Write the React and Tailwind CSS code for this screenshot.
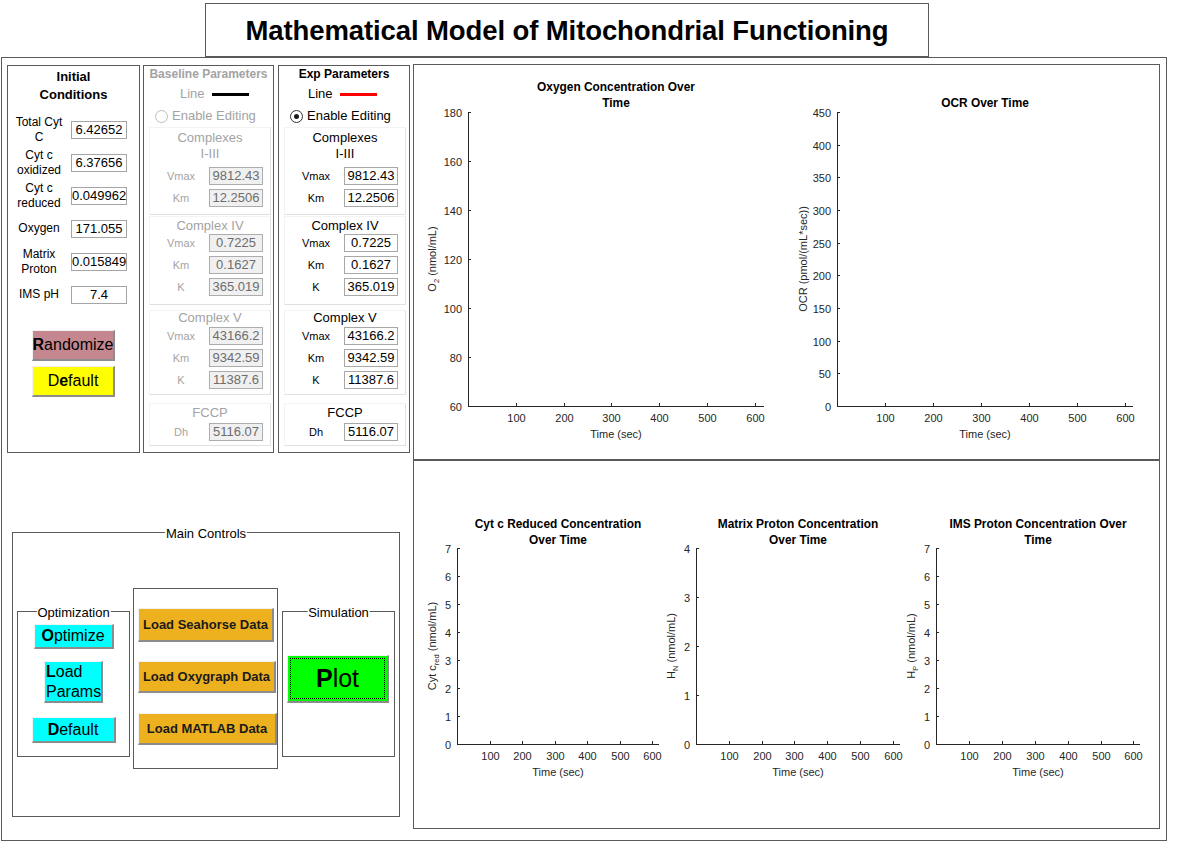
import React from 'react';

const initRows = [
  [['Total Cyt', 'C'], '6.42652'],
  [['Cyt c', 'oxidized'], '6.37656'],
  [['Cyt c', 'reduced'], '0.049962'],
  [['Oxygen'], '171.055'],
  [['Matrix', 'Proton'], '0.015849'],
  [['IMS pH'], '7.4'],
];

const groups = [
  {
    title: ['Complexes', 'I-III'],
    box: 'mt-[2px] h-[88px]',
    head: 'mt-[2px] leading-[16px]',
    body: 'mt-[5px]',
    rows: [['Vmax', '9812.43'], ['Km', '12.2506']],
  },
  {
    title: ['Complex IV'],
    box: 'mt-[1px] h-[89px]',
    head: 'mt-[1px] leading-[16px]',
    body: 'mt-0',
    rows: [['Vmax', '0.7225'], ['Km', '0.1627'], ['K', '365.019']],
  },
  {
    title: ['Complex V'],
    box: 'mt-[5px] h-[85px]',
    head: 'mt-0 leading-[14px]',
    body: 'mt-[2px]',
    rows: [['Vmax', '43166.2'], ['Km', '9342.59'], ['K', '11387.6']],
  },
  {
    title: ['FCCP'],
    box: 'mt-[8px] h-[43px]',
    head: 'mt-[1px] leading-[16px]',
    body: 'mt-[2px]',
    rows: [['Dh', '5116.07']],
  },
];

function Btn({ className = '', children }) {
  return (
    <button
      type="button"
      className={`flex items-center justify-center border-t border-l border-r-2 border-b-2 border-t-[#f2f2f2] border-l-[#f2f2f2] border-r-[#8c8c8c] border-b-[#8c8c8c] ${className}`}
    >
      {children}
    </button>
  );
}

function ParamPanel({ title, active, lineClass, lineColor, radioClass }) {
  const txt = active ? 'text-black' : 'text-[#a3a3a3]';
  return (
    <div className={`w-full h-full flex flex-col ${txt}`}>
      <div className="h-[16px] leading-[16px] text-center text-[12px] font-bold">{title}</div>
      <div className={`mt-[3px] h-[18px] flex items-center text-[13px] ${lineClass}`}>
        <span>Line</span>
        <span className={`ml-[7px] w-[37px] h-[3px] ${lineColor}`}></span>
      </div>
      <div className="mt-[4px] h-[18px] flex items-center text-[13px]">
        <span className={`ml-[11px] w-[13px] h-[13px] rounded-full border bg-white flex items-center justify-center ${radioClass}`}>
          {active && <span className="w-[5px] h-[5px] rounded-full bg-[#1a1a1a]"></span>}
        </span>
        <span className="ml-[4px]">Enable Editing</span>
      </div>
      {groups.map((g) => (
        <div key={g.title[0]} className={`ml-[5px] w-[122px] border border-[#f3f3f3] border-r-[#e1e1e1] border-b-[#e1e1e1] ${g.box}`}>
          <div className={`text-center text-[13px] ${g.head}`}>
            {g.title.map((t) => (
              <div key={t}>{t}</div>
            ))}
          </div>
          <div className={`flex flex-col gap-[4px] ${g.body}`}>
            {g.rows.map(([k, v]) => (
              <div key={k} className="flex items-center h-[18px]">
                <div className="w-[59px] pl-[3px] text-center text-[11px]">{k}</div>
                <div
                  className={`w-[54px] h-[18px] border text-center text-[13px] leading-[16px] ${
                    active ? 'bg-white border-[#a8a8a8] text-black' : 'bg-[#f0f0f0] border-[#adadad] text-[#6d6d6d]'
                  }`}
                >
                  {v}
                </div>
              </div>
            ))}
          </div>
        </div>
      ))}
    </div>
  );
}

function Axes({ x0, x1, yTop, yBot, xs, yMin, yMax, yStep, title, titleY, ylabel, ylx }) {
  const xt = [100, 200, 300, 400, 500, 600];
  const yt = [];
  for (let v = yMin; v <= yMax + 1e-9; v += yStep) yt.push(v);
  const yp = (v) => yBot - ((v - yMin) / (yMax - yMin)) * (yBot - yTop);
  const cx = (x0 + x1) / 2;
  const ink = '#262626';
  return (
    <g fontFamily="Liberation Sans, Arial, sans-serif" fill={ink}>
      {title.map((t, i) => (
        <text key={t} x={cx} y={titleY + i * 16 + 4} textAnchor="middle" fontWeight="bold" fontSize="11.9" fill="#000">
          {t}
        </text>
      ))}
      <line x1={x0 + 0.5} y1={yTop} x2={x0 + 0.5} y2={yBot + 1} stroke={ink} />
      <line x1={x0} y1={yBot + 0.5} x2={x1} y2={yBot + 0.5} stroke={ink} />
      {xt.map((v) => {
        const x = Math.round(x0 + v * xs) + 0.5;
        return (
          <g key={v}>
            <line x1={x} x2={x} y1={yBot} y2={yBot - 3} stroke={ink} />
            <text x={x} y={yBot + 16} textAnchor="middle" fontSize="11">
              {v}
            </text>
          </g>
        );
      })}
      {yt.map((v) => {
        const y = Math.round(yp(v)) + 0.5;
        return (
          <g key={v}>
            <line x1={x0} x2={x0 + 3} y1={y} y2={y} stroke={ink} />
            <text x={x0 - 6} y={y + 4} textAnchor="end" fontSize="11">
              {v}
            </text>
          </g>
        );
      })}
      <text x={cx} y={yBot + 32} textAnchor="middle" fontSize="11">
        Time (sec)
      </text>
      <text transform={`translate(${ylx + 4} ${(yTop + yBot) / 2}) rotate(-90)`} textAnchor="middle" fontSize="11">
        {ylabel}
      </text>
    </g>
  );
}

function Sub({ main, sub, rest }) {
  return (
    <>
      {main}
      <tspan dy="3" fontSize="7.5">{sub}</tspan>
      <tspan dy="-3">{rest}</tspan>
    </>
  );
}

export default function App() {
  return (
    <div className="w-[1177px] h-[853px] bg-white text-black font-['Liberation_Sans',Arial,sans-serif] overflow-hidden">
      <div className="ml-[205px] mt-[3px] w-[724px] h-[54px] border border-[#5a5a5a] flex items-center justify-center">
        <h1 className="text-[27.5px] font-bold leading-none tracking-[-0.1px] pt-[2px]">Mathematical Model of Mitochondrial Functioning</h1>
      </div>

      <div className="ml-[1px] w-[1166px] h-[784px] border border-[#5a5a5a] flex">
        {/* left side */}
        <div className="w-[411px] flex flex-col">
          <div className="mt-[7px] ml-[5px] flex h-[388px]">
            <div className="w-[133px] h-full border border-[#5a5a5a] flex flex-col">
              <div className="pt-[2px] text-center text-[13px] font-bold leading-[18px]">
                <div>Initial</div>
                <div>Conditions</div>
              </div>
              <div className="mt-[9px] flex flex-col">
                {initRows.map(([lab, val]) => (
                  <div key={val} className="h-[33px] flex items-center">
                    <div className="w-[62px] text-center text-[12px] leading-[15px]">
                      {lab.map((l) => (
                        <div key={l}>{l}</div>
                      ))}
                    </div>
                    <div className="ml-[1px] w-[56px] h-[18px] border border-[#a5a5a5] text-center text-[13px] leading-[16px]">
                      {val}
                    </div>
                  </div>
                ))}
              </div>
              <Btn className="mt-[19px] mx-auto w-[83px] h-[31px] bg-[#c4878f] text-[16px]">
                <b>R</b>andomize
              </Btn>
              <Btn className="mt-[5px] mx-auto w-[83px] h-[31px] bg-[#ffff00] text-[16px]">
                D<b>e</b>fault
              </Btn>
            </div>

            <div className="ml-[3px] w-[131px] h-full border border-[#5a5a5a]">
              <ParamPanel
                title="Baseline Parameters"
                active={false}
                lineClass="ml-[36px]"
                lineColor="bg-black"
                radioClass="border-[#bdbdbd]"
              />
            </div>

            <div className="ml-[4px] w-[132px] h-full border border-[#5a5a5a]">
              <ParamPanel
                title="Exp Parameters"
                active
                lineClass="ml-[29px]"
                lineColor="bg-[#ff0000]"
                radioClass="border-[#333333]"
              />
            </div>
          </div>

          {/* main controls */}
          <div className="relative mt-[79px] ml-[10px] w-[388px] h-[285px] border border-[#5a5a5a]">
            <span className="absolute left-1/2 top-0 -translate-x-1/2 -translate-y-1/2 bg-white px-[1px] text-[13px] leading-[15px]">
              Main Controls
            </span>
            <div className="flex items-start">
              <div className="relative ml-[4px] mt-[78px] w-[113px] h-[146px] border border-[#5a5a5a] flex flex-col">
                <span className="absolute left-1/2 top-0 -translate-x-1/2 -translate-y-1/2 bg-white px-[1px] text-[13px] leading-[15px]">
                  Optimization
                </span>
                <Btn className="mt-[12px] mx-auto w-[80px] h-[25px] bg-[#00ffff] text-[16px]">
                  <b>O</b>ptimize
                </Btn>
                <Btn className="mt-[12px] mx-auto w-[59px] h-[42px] bg-[#00ffff] text-[16px] leading-[20px] !justify-start">
                  <span className="pl-[1px] text-left">
                    <b>L</b>oad
                    <br />
                    Params
                  </span>
                </Btn>
                <Btn className="mt-[14px] mx-auto w-[84px] h-[26px] bg-[#00ffff] text-[16px]">
                  <b>D</b>efault
                </Btn>
              </div>

              <div className="ml-[3px] mt-[55px] w-[145px] h-[181px] border border-[#5a5a5a] flex flex-col">
                <Btn className="mt-[19px] ml-[4px] w-[136px] h-[34px] bg-[#edb120] text-[13px] font-bold text-[#1a1a1a]">
                  Load Seahorse Data
                </Btn>
                <Btn className="mt-[19px] ml-[4px] w-[138px] h-[32px] bg-[#edb120] text-[13px] font-bold text-[#1a1a1a]">
                  Load Oxygraph Data
                </Btn>
                <Btn className="mt-[20px] ml-[4px] w-[139px] h-[32px] bg-[#edb120] text-[13px] font-bold text-[#1a1a1a]">
                  Load MATLAB Data
                </Btn>
              </div>

              <div className="relative ml-[4px] mt-[78px] w-[113px] h-[146px] border border-[#5a5a5a]">
                <span className="absolute left-1/2 top-0 -translate-x-1/2 -translate-y-1/2 bg-white px-[1px] text-[13px] leading-[15px]">
                  Simulation
                </span>
                <Btn className="mt-[43px] ml-[4px] w-[102px] h-[48px] bg-[#00ff00] text-[25px] p-[2px]">
                  <span className="w-full h-full border border-dotted border-black flex items-center justify-center">
                    <span>
                      <b>P</b>lot
                    </span>
                  </span>
                </Btn>
              </div>
            </div>
          </div>
        </div>

        {/* plots */}
        <div className="mt-[6px] w-[747px] flex flex-col">
          <div className="h-[396px] border border-[#5a5a5a]">
            <svg width="745" height="394" viewBox="414 65 745 394" className="block">
              <Axes
                x0={468} x1={764} yTop={112} yBot={406} xs={0.4775}
                yMin={60} yMax={180} yStep={20}
                title={['Oxygen Concentration Over', 'Time']} titleY={87}
                ylabel={<Sub main="O" sub="2" rest=" (nmol/mL)" />} ylx={432}
              />
              <Axes
                x0={837} x1={1133} yTop={112} yBot={406} xs={0.4795}
                yMin={0} yMax={450} yStep={50}
                title={['OCR Over Time']} titleY={103}
                ylabel="OCR (pmol/(mL*sec))" ylx={803}
              />
            </svg>
          </div>
          <div className="h-[369px] border border-[#5a5a5a]">
            <svg width="745" height="367" viewBox="414 461 745 367" className="block">
              <Axes
                x0={457} x1={659} yTop={548} yBot={744} xs={0.3255}
                yMin={0} yMax={7} yStep={1}
                title={['Cyt c Reduced Concentration', 'Over Time']} titleY={524}
                ylabel={<Sub main="Cyt c" sub="red" rest=" (nmol/mL)" />} ylx={432}
              />
              <Axes
                x0={696} x1={900} yTop={548} yBot={744} xs={0.3275}
                yMin={0} yMax={4} yStep={1}
                title={['Matrix Proton Concentration', 'Over Time']} titleY={524}
                ylabel={<Sub main="H" sub="N" rest=" (nmol/mL)" />} ylx={671}
              />
              <Axes
                x0={936} x1={1140} yTop={548} yBot={744} xs={0.329}
                yMin={0} yMax={7} yStep={1}
                title={['IMS Proton Concentration Over', 'Time']} titleY={524}
                ylabel={<Sub main="H" sub="P" rest=" (nmol/mL)" />} ylx={911}
              />
            </svg>
          </div>
        </div>
      </div>
    </div>
  );
}
